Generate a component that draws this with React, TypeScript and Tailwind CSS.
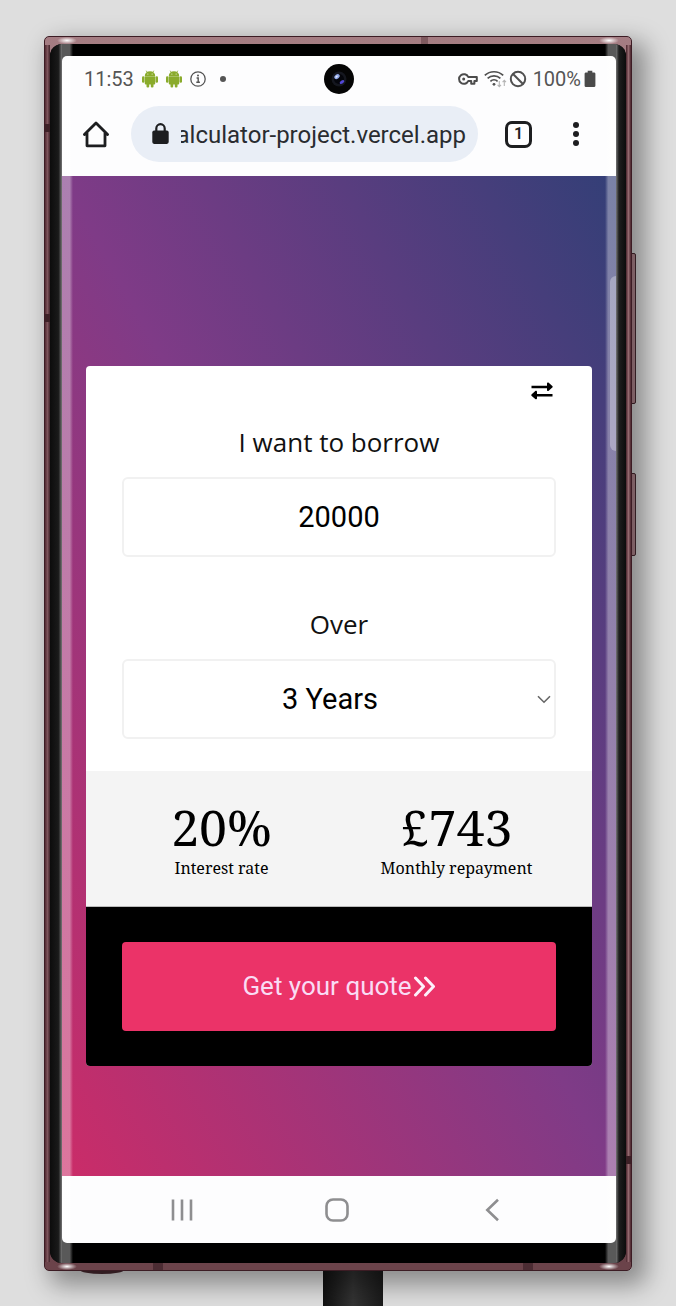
import { useState } from "react";
import type { ReactNode } from "react";

const ROBOTO = "font-['Roboto',sans-serif]";

function AndroidIcon() {
  return (
    <svg viewBox="0 0 16 18" className="h-[18px] w-4" fill="#8aab2c" aria-hidden="true">
      <path d="M2.800 6a5.200 4.800 0 0 1 10.400 0z" />
      <path d="M5.200 2.400 4.200 .7M10.800 2.400 11.800 .7" stroke="#8aab2c" strokeWidth="0.800" />
      <circle cx="5.900" cy="3.900" r="0.500" fill="#fff" />
      <circle cx="10.100" cy="3.900" r="0.500" fill="#fff" />
      <path d="M2.800 6.300h10.400v7.300a1 1 0 0 1-1 1H3.800a1 1 0 0 1-1-1z" />
      <rect x="0" y="6.300" width="2.500" height="6.400" rx="1.200" />
      <rect x="13.500" y="6.300" width="2.500" height="6.400" rx="1.200" />
      <rect x="4.500" y="12" width="2.700" height="5.600" rx="1.100" />
      <rect x="8.800" y="12" width="2.700" height="5.600" rx="1.100" />
    </svg>
  );
}

function InfoIcon() {
  return (
    <svg viewBox="0 0 16 16" className="size-4" fill="none" stroke="#555" aria-hidden="true">
      <circle cx="8" cy="8" r="7.200" strokeWidth="1.300" />
      <path d="M6.600 7h1.600v4.200M6.300 11.300h3.600" strokeWidth="1.400" />
      <circle cx="8" cy="4.600" r="1" fill="#555" stroke="none" />
    </svg>
  );
}

function KeyIcon() {
  return (
    <svg viewBox="0 0 20 12" className="h-3 w-5" fill="none" stroke="#4c4c4c" strokeWidth="2" aria-hidden="true">
      <path d="M10.200 3.900A4.800 4.800 0 1 0 10.200 8.100H13.200v2.600h3.200V8.100h2.400V3.900z" strokeLinejoin="round" />
      <circle cx="5.700" cy="6" r="1.500" fill="#4c4c4c" stroke="none" />
    </svg>
  );
}

function WifiIcon() {
  return (
    <svg viewBox="0 0 23 18" className="h-[18px] w-[23px]" fill="none" aria-hidden="true">
      <g stroke="#505050" strokeWidth="1.700">
        <path d="M.8 5.400a13.400 13.400 0 0 1 18.400 0" />
        <path d="M3.600 8.400a9.400 9.400 0 0 1 12.800 0" />
        <path d="M6.400 11.300a5.300 5.300 0 0 1 7.200 0" />
      </g>
      <circle cx="10" cy="14.300" r="1.400" fill="#505050" />
      <path d="M15.300 11v5.400M13.600 14.800l1.700 1.800 1.700-1.800M20.300 16v-5.400M18.600 12.200l1.700-1.800 1.700 1.800" stroke="#b5b5b5" strokeWidth="1.100" />
    </svg>
  );
}

function BanIcon() {
  return (
    <svg viewBox="0 0 18 18" className="size-[18px]" fill="none" stroke="#505050" strokeWidth="2" aria-hidden="true">
      <circle cx="9" cy="9" r="7.200" />
      <path d="M3.800 3.800l10.400 10.400" />
    </svg>
  );
}

function BatteryIcon() {
  return (
    <svg viewBox="0 0 12 18" className="h-[18px] w-3" fill="#4a4a4a" aria-hidden="true">
      <path d="M3.700.8h4.600v1.600H10A1.400 1.400 0 0 1 11.400 3.800v11.900a1.400 1.400 0 0 1-1.400 1.400H2A1.400 1.400 0 0 1 .6 15.700V3.800A1.400 1.400 0 0 1 2 2.400h1.700z" />
    </svg>
  );
}

function StatusBar() {
  return (
    <div className="relative flex h-[45px] items-center justify-between pl-[22px] pr-5 text-[#555]">
      <div className="flex items-center">
        <span className={`${ROBOTO} text-xl leading-6`}>11:53</span>
        <div className="ml-2 flex items-center gap-2">
          <AndroidIcon />
          <AndroidIcon />
          <InfoIcon />
        </div>
        <span className="ml-[14px] size-[6px] rounded-full bg-[#555]" />
      </div>
      <div className="absolute left-1/2 top-2 flex size-[30px] -translate-x-1/2 items-center justify-center rounded-full bg-[#050505]">
        <svg viewBox="0 0 16 16" className="size-4" aria-hidden="true">
          <circle cx="8" cy="8" r="7.500" fill="#15171f" />
          <circle cx="8" cy="8" r="5" fill="#05060c" />
          <ellipse cx="6" cy="5.600" rx="3" ry="2.100" transform="rotate(-40 6 5.600)" fill="#8fa6e6" />
          <ellipse cx="5.600" cy="5.600" rx="1.300" ry="0.900" transform="rotate(-40 5.600 5.600)" fill="#e4ecff" />
          <ellipse cx="11" cy="11" rx="2.600" ry="1.500" transform="rotate(-35 11 11)" fill="#5348d6" />
        </svg>
      </div>
      <div className="flex items-center">
        <KeyIcon />
        <span className="ml-[6px] flex"><WifiIcon /></span>
        <span className="ml-[2px] flex"><BanIcon /></span>
        <span className={`${ROBOTO} ml-[6px] text-xl leading-6`}>100%</span>
        <span className="ml-[3px] flex"><BatteryIcon /></span>
      </div>
    </div>
  );
}

function BrowserBar() {
  return (
    <div className="flex items-center pb-[14px] pl-5 pr-8 pt-[5px]">
      <button type="button" aria-label="Home" className="shrink-0">
        <svg viewBox="0 0 28 28" className="size-7" fill="none" stroke="#1d1e20" strokeWidth="2.800" strokeLinejoin="round" strokeLinecap="round">
          <path d="M2.400 14.600 14 2.900l11.600 11.700M5 12.600V25.800h18V12.600" />
        </svg>
      </button>
      <div className="ml-[21px] flex h-14 min-w-0 flex-1 items-center rounded-full bg-[#e9eef6] pl-[21px] pr-3">
        <svg viewBox="0 0 17 22" className="h-[22px] w-[17px] shrink-0" aria-hidden="true">
          <rect x="0.300" y="7.600" width="16.400" height="13.300" rx="1.800" fill="#1d1e20" />
          <path d="M4.300 8.200V5.400a4.200 4.200 0 0 1 8.400 0v2.800" fill="none" stroke="#1d1e20" strokeWidth="2.200" />
        </svg>
        <input
          aria-label="Address"
          dir="rtl"
          readOnly
          defaultValue="calculator-project.vercel.app"
          className={`${ROBOTO} ml-3 h-8 min-w-0 flex-1 bg-transparent pt-[2px] text-2xl text-[#2a2c30] outline-none`}
        />
      </div>
      <button
        type="button"
        aria-label="Open tabs"
        className={`${ROBOTO} ml-[27px] flex size-[27px] shrink-0 items-center justify-center rounded-[7px] border-[3px] border-[#1d1e20] text-base font-semibold leading-none text-[#1d1e20]`}
      >
        1
      </button>
      <button type="button" aria-label="Menu" className="ml-9 flex w-4 shrink-0 flex-col items-center gap-[3px]">
        <span className="size-[6px] rounded-full bg-[#1d1e20]" />
        <span className="size-[6px] rounded-full bg-[#1d1e20]" />
        <span className="size-[6px] rounded-full bg-[#1d1e20]" />
      </button>
    </div>
  );
}

function Stat({ value, label }: { value: string; label: string }) {
  return (
    <div className="flex flex-col items-center font-['Noto_Serif','DejaVu_Serif_Condensed','DejaVu_Serif',serif] text-black">
      <span className="text-[50px] leading-[58px]">{value}</span>
      <span className="whitespace-nowrap text-base leading-6">{label}</span>
    </div>
  );
}

function LoanCard() {
  const [amount, setAmount] = useState("20000");
  const [years, setYears] = useState("3");
  const rate = 20;
  const r = rate / 100 / 12;
  const monthly = (Number(amount) * r) / (1 - Math.pow(1 + r, -12 * Number(years)));

  return (
    <form className="overflow-hidden rounded-[4px] bg-white" onSubmit={(e) => e.preventDefault()}>
      <div className="flex flex-col px-9 pb-8 pt-[14px]">
        <button type="button" aria-label="Switch" className="mr-[2px] self-end">
          <svg viewBox="0 0 24 22" className="h-[22px] w-6" fill="#000">
            <path d="M1.500 5.700H17V3.600c0-1 1-1.400 1.700-.8l3.600 3.100c.6.500.6 1.200 0 1.700l-3.600 3.200c-.7.600-1.700.2-1.700-.8V8.200H1.500z" />
            <path d="M22.500 14H7v-2.200c0-1-1-1.400-1.700-.8l-3.600 3.200c-.6.500-.6 1.200 0 1.700l3.600 3.100c.7.600 1.700.2 1.700-.8v-1.700h15.500z" />
          </svg>
        </button>
        <label htmlFor="amount" className="mt-[22px] text-center font-['Open_Sans',sans-serif] text-[26px] leading-9 text-[#111]">
          I want to borrow
        </label>
        <input
          id="amount"
          inputMode="numeric"
          value={amount}
          onChange={(e) => setAmount(e.target.value)}
          className={`${ROBOTO} mt-[17px] h-20 w-full rounded-[6px] border-2 border-[#f1f1f1] text-center text-[29px] text-black outline-none`}
        />
        <label htmlFor="term" className="mt-[49px] text-center font-['Open_Sans',sans-serif] text-[26px] leading-9 text-[#111]">
          Over
        </label>
        <div className="relative mt-[17px]">
          <select
            id="term"
            value={years}
            onChange={(e) => setYears(e.target.value)}
            className={`${ROBOTO} h-20 w-full appearance-none rounded-[6px] border-2 border-[#f1f1f1] bg-white pr-[18px] pt-[2px] text-center text-[29px] text-black outline-none [text-align-last:center]`}
          >
            <option value="1">1 Years</option>
            <option value="2">2 Years</option>
            <option value="3">3 Years</option>
            <option value="4">4 Years</option>
            <option value="5">5 Years</option>
          </select>
          <svg viewBox="0 0 14 9" className="pointer-events-none absolute right-[5px] top-9 h-[9px] w-[14px]" fill="none" stroke="#666" strokeWidth="1.600" aria-hidden="true">
            <path d="M1 1.200l6 6 6-6" />
          </svg>
        </div>
      </div>
      <div className="grid grid-cols-2 border-b border-[#bbb] bg-[#f4f4f4] px-[18px] pb-[26px] pt-[27px]">
        <Stat value={`${rate}%`} label="Interest rate" />
        <Stat value={`£${Math.round(monthly)}`} label="Monthly repayment" />
      </div>
      <div className="bg-black px-9 pb-[35px] pt-[35px]">
        <button
          type="submit"
          className={`${ROBOTO} flex h-[89px] w-full items-center justify-center rounded-[4px] bg-[#eb3368] text-[26px] text-[#f9dcf4]`}
        >
          Get your quote
          <svg viewBox="0 0 24 22" className="h-[22px] w-6" fill="none" stroke="#fdf0fb" strokeWidth="3" strokeLinecap="round" strokeLinejoin="round" aria-hidden="true">
            <path d="M3.500 2l8 8.500-8 8.500M13.500 2l8 8.500-8 8.500" />
          </svg>
        </button>
      </div>
    </form>
  );
}

function NavButton({ label, children }: { label: string; children: ReactNode }) {
  return (
    <button type="button" aria-label={label} className="flex items-center justify-center">
      <svg viewBox="0 0 24 24" className="size-6" fill="none" stroke="#8e8e90" strokeWidth="2.600">
        {children}
      </svg>
    </button>
  );
}

function NavBar() {
  return (
    <nav className="grid h-[67px] grid-cols-3 pl-[42px] pr-[46px]">
      <NavButton label="Recent apps">
        <path d="M3 1.500v21M12 1.500v21M21 1.500v21" />
      </NavButton>
      <NavButton label="Go home">
        <rect x="1.500" y="1.500" width="21" height="21" rx="6.500" />
      </NavButton>
      <NavButton label="Back">
        <path d="M18 1.800 7.300 12 18 22.200" />
      </NavButton>
    </nav>
  );
}

export default function App() {
  return (
    <div className="min-h-screen overflow-hidden bg-[#dedede] px-11 pt-9">
      <div className="relative">
        <div className="absolute -right-1 top-[217px] h-[151px] w-[5px] rounded-r-[2px] border border-[#4a2a31] bg-[#b98d94]" />
        <div className="absolute -right-1 top-[437px] h-[83px] w-[5px] rounded-r-[2px] border border-[#4a2a31] bg-[#b98d94]" />
        <div className="absolute -bottom-[3px] left-9 h-2 w-11 rounded-[50%] bg-[#4a2a31]" />
        <div className="relative rounded-[5px] border border-[#3c1c24] bg-linear-to-b from-[#a57d83] via-[#70454d] to-[#6b434a] px-[5px] py-[7px] shadow-[10px_10px_24px_4px_rgba(0,0,0,0.38)]">
          <div className="absolute inset-y-2 left-0 w-[5px] bg-linear-to-r from-[#542b33] via-[#7d555c] to-[#40232a]" />
          <div className="absolute inset-y-2 right-0 w-[5px] bg-linear-to-l from-[#4a252d] via-[#93696f] to-[#4a252d]" />
          <div className="absolute right-[203px] top-0 h-[7px] w-[7px] bg-[#7f5a60]" />
          <div className="absolute bottom-0 left-[108px] h-[7px] w-[10px] bg-[#4c2c33]" />
          <div className="absolute bottom-0 right-[98px] h-[7px] w-[10px] bg-[#4c2c33]" />
          <div className="absolute left-0 top-[87px] h-2 w-[5px] bg-[#3c2026]" />
          <div className="absolute left-0 top-[277px] h-2 w-[5px] bg-[#3c2026]" />
          <div className="absolute bottom-[106px] right-0 h-2 w-[5px] bg-[#3c2026]" />
          <div className="absolute left-3 top-0 h-[7px] w-5 bg-radial from-white to-transparent to-70%" />
          <div className="absolute right-3 top-0 h-[7px] w-5 bg-radial from-white to-transparent to-70%" />
          <div className="absolute bottom-0 left-3 h-[7px] w-5 bg-radial from-white to-transparent to-70%" />
          <div className="absolute bottom-0 right-3 h-[7px] w-5 bg-radial from-white to-transparent to-70%" />
          <div className="relative overflow-hidden rounded-[12px] bg-black pb-5 pl-3 pr-[10px] pt-3">
            <div className="absolute inset-y-0 left-0 w-3 bg-linear-to-r from-[#0c0c0c] via-[#1a1a1a] via-70% to-[#777]" />
            <div className="absolute inset-y-0 right-0 w-[10px] bg-linear-to-l from-[#0c0c0c] via-[#1e1e1e] via-70% to-[#777]" />
            <div className="relative overflow-hidden rounded-[5px] bg-[#fdfdfe]">
              <StatusBar />
              <BrowserBar />
              <main className="bg-linear-to-tr/srgb from-[#cb2c68] via-[#7f3b87] to-[#333f77] px-6 pb-[110px] pt-[190px]">
                <LoanCard />
              </main>
              <NavBar />
              <div className="absolute right-0 top-[220px] h-[175px] w-[6px] rounded-l-[6px] bg-white/30" />
            </div>
            <div className="pointer-events-none absolute inset-y-0 left-3 w-[11px] bg-linear-to-r from-white/35 via-white/35 via-70% to-transparent" />
            <div className="pointer-events-none absolute inset-y-0 right-[10px] w-[11px] bg-linear-to-l from-white/35 via-white/35 via-70% to-transparent" />
          </div>
        </div>
      </div>
      <div className="flex justify-center pl-[30px]">
        <div className="h-[35px] w-[60px] bg-linear-to-r from-[#111] via-[#333] to-[#1a1a1a]" />
      </div>
    </div>
  );
}
